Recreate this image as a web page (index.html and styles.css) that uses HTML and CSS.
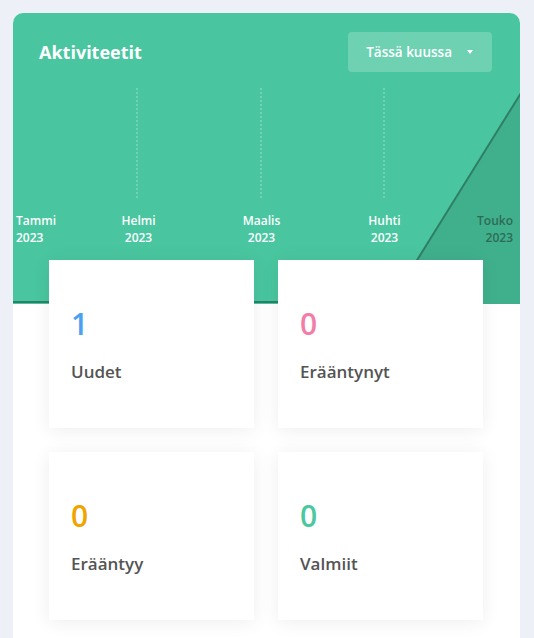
FILE: index.html
```html
<!DOCTYPE html>
<html lang="fi">
<head>
    <meta charset="UTF-8">
    <meta name="viewport" content="width=device-width, initial-scale=1.0">
    <title>Aktiviteetit</title>
    <link rel="stylesheet" href="styles.css">
</head>
<body>
    <!-- Activity widget -->
    <div class="widget">
        <div class="widget-head">
            <!-- Chart background -->
            <svg class="chart" viewBox="0 0 507 291" preserveAspectRatio="none">
                <line x1="124" y1="75" x2="124" y2="187" class="grid-line"/>
                <line x1="248" y1="75" x2="248" y2="187" class="grid-line"/>
                <line x1="371" y1="75" x2="371" y2="187" class="grid-line"/>
                <polygon points="378,289 507,81 507,291 378,291" class="area"/>
                <polyline points="0,289 378,289 508,80" class="area-line"/>
            </svg>

            <div class="head-row">
                <h1>Aktiviteetit</h1>
                <button class="period">
                    Tässä kuussa
                    <span class="caret"></span>
                </button>
            </div>

            <div class="months">
                <div class="month first">Tammi<br>2023</div>
                <div class="month">Helmi<br>2023</div>
                <div class="month">Maalis<br>2023</div>
                <div class="month">Huhti<br>2023</div>
                <div class="month last">Touko<br>2023</div>
            </div>
        </div>

        <div class="stats">
            <div class="stat">
                <span class="stat-value blue">1</span>
                <span class="stat-label">Uudet</span>
            </div>
            <div class="stat">
                <span class="stat-value pink">0</span>
                <span class="stat-label">Erääntynyt</span>
            </div>
            <div class="stat">
                <span class="stat-value orange">0</span>
                <span class="stat-label">Erääntyy</span>
            </div>
            <div class="stat">
                <span class="stat-value green">0</span>
                <span class="stat-label">Valmiit</span>
            </div>
        </div>
    </div>
</body>
</html>
```

FILE: styles.css
```css
body {
    font-family: 'Open Sans', 'Liberation Sans', sans-serif;
    margin: 0;
    padding: 13px 14px 0 13px;
    background-color: #eef0f7;
    height: 638px;
    box-sizing: border-box;
    overflow: hidden;
}

.widget {
    background-color: #fff;
    border-radius: 10px 10px 0 0;
    overflow: hidden;
    height: 625px;
}

.widget-head {
    position: relative;
    height: 291px;
    background-color: #49c69f;
}

.chart {
    position: absolute;
    top: 0;
    left: 0;
    width: 100%;
    height: 100%;
}

.grid-line {
    stroke: rgba(255, 255, 255, 0.45);
    stroke-width: 1;
    stroke-dasharray: 2 2;
}

.area {
    fill: #40b08c;
}

.area-line {
    fill: none;
    stroke: #2f7f66;
    stroke-width: 2;
}

.head-row {
    position: relative;
    display: flex;
    justify-content: space-between;
    align-items: center;
    padding: 19px 28px 0 26px;
}

h1 {
    margin: 0;
    font-size: 18px;
    font-weight: 700;
    color: #fff;
}

.period {
    display: flex;
    align-items: center;
    height: 40px;
    padding: 0 19px 0 18px;
    border: none;
    border-radius: 4px;
    background-color: rgba(255, 255, 255, 0.2);
    color: #fff;
    font-family: inherit;
    font-size: 13.5px;
    font-weight: 600;
}

.caret {
    margin-left: 15px;
    width: 0;
    height: 0;
    border-left: 3.5px solid transparent;
    border-right: 3.5px solid transparent;
    border-top: 4px solid #fff;
}

/* Month labels under the chart */
.months {
    position: relative;
    display: grid;
    grid-template-columns: 61px 123px 123px 123px 1fr;
    padding: 0 7px 0 3px;
    margin-top: 141px;
    font-size: 12px;
    line-height: 16.5px;
    font-weight: 600;
    color: #fff;
    text-align: center;
}

.month.first {
    text-align: left;
}

.month.last {
    text-align: right;
    color: #2d6b57;
}

/* Stat cards */
.stats {
    position: relative;
    display: grid;
    grid-template-columns: 1fr 1fr;
    gap: 24px;
    padding: 0 37px 0 36px;
    margin-top: -44px;
}

.stat {
    display: flex;
    flex-direction: column;
    height: 168px;
    box-sizing: border-box;
    padding: 46px 22px 0;
    background-color: #fff;
    box-shadow: 0 2px 18px rgba(0, 0, 0, 0.07);
}

.stat-value {
    font-size: 30px;
    line-height: 36px;
    font-weight: 600;
}

.stat-label {
    margin-top: 18px;
    font-size: 17px;
    line-height: 24px;
    font-weight: 600;
    color: #545454;
}

.blue { color: #4ba0f3; }
.pink { color: #f27ea8; }
.orange { color: #f0a400; }
.green { color: #4cc8a0; }
```
